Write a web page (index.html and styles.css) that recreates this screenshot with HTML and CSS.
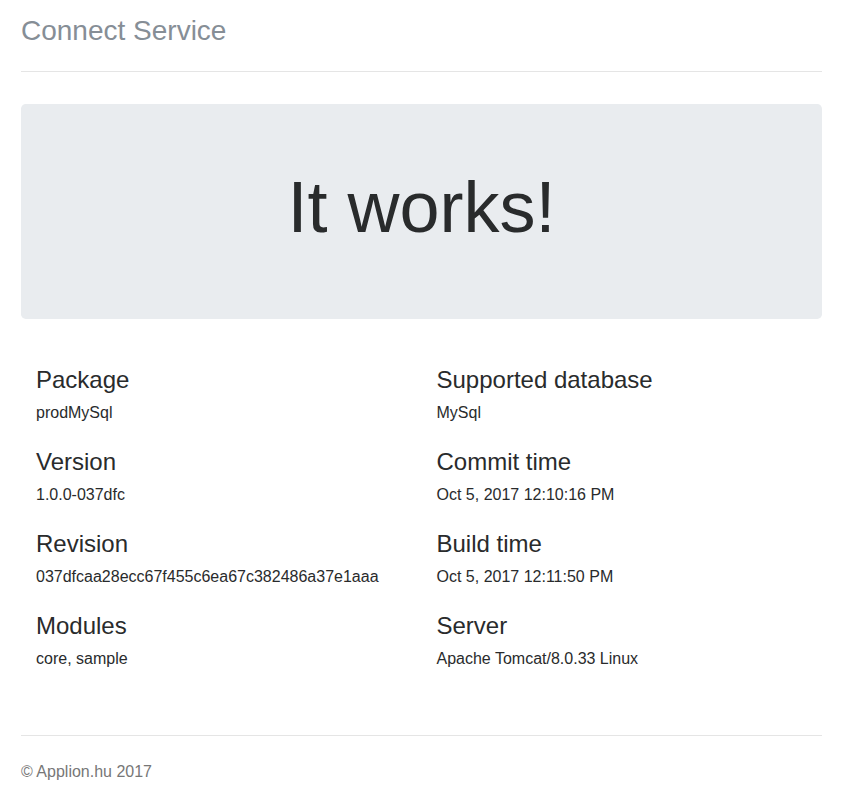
FILE: index.html
```html
<!DOCTYPE html>
<html lang="en">
<head>
<meta charset="utf-8">
<title>Connect Service</title>
<link rel="stylesheet" href="styles.css">
</head>
<body>
<div class="container">
  <header class="header">
    <h3 class="brand">Connect Service</h3>
  </header>
  <div class="jumbotron">
    <h1 class="display">It works!</h1>
  </div>
  <div class="marketing">
    <div class="col">
      <h4>Package</h4>
      <p>prodMySql</p>
      <h4>Version</h4>
      <p>1.0.0-037dfc</p>
      <h4>Revision</h4>
      <p>037dfcaa28ecc67f455c6ea67c382486a37e1aaa</p>
      <h4>Modules</h4>
      <p>core, sample</p>
    </div>
    <div class="col">
      <h4>Supported database</h4>
      <p>MySql</p>
      <h4>Commit time</h4>
      <p>Oct 5, 2017 12:10:16 PM</p>
      <h4>Build time</h4>
      <p>Oct 5, 2017 12:11:50 PM</p>
      <h4>Server</h4>
      <p>Apache Tomcat/8.0.33 Linux</p>
    </div>
  </div>
  <footer class="footer">
    <p>&copy; Applion.hu 2017</p>
  </footer>
</div>
</body>
</html>
```

FILE: styles.css
```css
html, body {
  margin: 0;
  padding: 0;
  background: #fff;
}
body {
  font-family: "Liberation Sans", Arial, sans-serif;
  font-size: 16px;
  line-height: 1.5;
  color: #292b2c;
}
.container {
  padding: 16px 21px 0;
}
.header {
  padding-bottom: 24px;
  border-bottom: 1px solid #e5e5e5;
}
.brand {
  margin: 0;
  font-size: 28px;
  font-weight: normal;
  line-height: 1.1;
  color: #868e96;
}
.jumbotron {
  margin-top: 32px;
  margin-bottom: 32px;
  padding: 64px 32px;
  background: #e9ecef;
  border-radius: 4.8px;
  text-align: center;
}
.display {
  margin: 0 0 8px;
  font-size: 72px;
  font-weight: normal;
  line-height: 1.1;
}
.marketing {
  display: grid;
  grid-template-columns: 1fr 1fr;
  margin: 48px 0 47.6px;
}
.col {
  padding: 0 15px;
}
.col h4 {
  margin: 0 0 8px;
  font-size: 24px;
  font-weight: normal;
  line-height: 26px;
}
.col p {
  margin: 0 0 16px;
}
.col p + h4 {
  margin-top: 24px;
}
.footer {
  padding-top: 24px;
  border-top: 1px solid #e5e5e5;
  color: #777;
}
.footer p {
  margin: 0 0 16px;
}
```
